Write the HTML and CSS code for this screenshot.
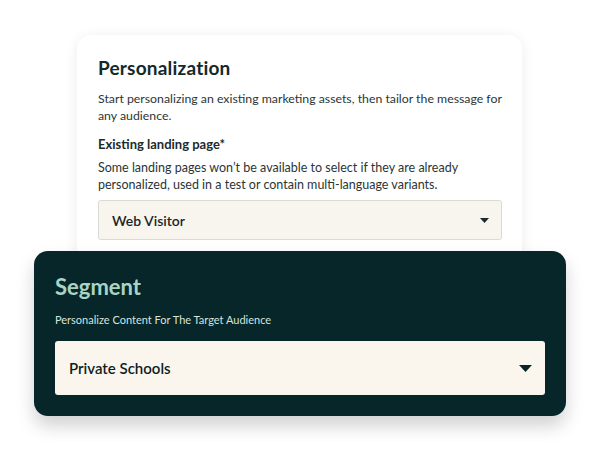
FILE: index.html
```html
<!DOCTYPE html>
<html lang="en">
  <head>
    <meta charset="UTF-8" />
    <meta name="viewport" content="width=device-width, initial-scale=1.0" />
    <title>Personalization</title>
    <link rel="stylesheet" href="styles.css">
  </head>
  <body>
    <div class="stage">
      <div class="panel">
        <h2 class="panel-title">Personalization</h2>
        <p class="panel-text">
          Start personalizing an existing marketing assets, then tailor the message for
          any audience.
        </p>
        <h3 class="field-label">Existing landing page*</h3>
        <p class="field-help">
          Some landing pages won’t be available to select if they are already
          personalized, used in a test or contain multi-language variants.
        </p>
        <div class="select">
          <span>Web Visitor</span>
          <svg class="caret" width="9" height="5" viewBox="0 0 9 5"><path d="M0 0h9L4.5 5z" fill="#1b2b2b"/></svg>
        </div>
      </div>

      <div class="segment">
        <h2 class="segment-title">Segment</h2>
        <p class="segment-text">Personalize Content For The Target Audience</p>
        <div class="select select-lg">
          <span>Private Schools</span>
          <svg class="caret" width="13" height="7" viewBox="0 0 13 7"><path d="M0 0h13L6.5 7z" fill="#0b2424"/></svg>
        </div>
      </div>
    </div>
  </body>
</html>
```

FILE: styles.css
```css
body {
  margin: 0;
  background: #ffffff;
  font-family: Lato, "Noto Sans", sans-serif;
  color: #1c2b2b;
}
.stage {
  width: 600px;
  height: 450px;
  padding-top: 35px;
  box-sizing: border-box;
}
.panel {
  width: 445px;
  height: 240px;
  margin-left: 77px;
  box-sizing: border-box;
  padding: 21px 20px 0 21px;
  background: #fff;
  border-radius: 14px;
  box-shadow: 0 2px 14px rgba(0, 0, 0, 0.08);
}
.panel-title {
  margin: 0;
  font-size: 19px;
  font-weight: 700;
  color: #13292a;
  letter-spacing: 0.2px;
}
.panel-text {
  margin: 11px 0 0;
  font-size: 12.3px;
  line-height: 17px;
  color: #2b3535;
}
.field-label {
  margin: 12px 0 0;
  font-size: 13px;
  font-weight: 700;
  color: #1d2a2a;
}
.field-help {
  margin: 7px 0 0;
  font-size: 12.5px;
  line-height: 17px;
  color: #2b3535;
}
.select {
  display: flex;
  align-items: center;
  justify-content: space-between;
  height: 40px;
  margin-top: 7px;
  padding: 0 12px 0 13px;
  box-sizing: border-box;
  background: #f8f5ee;
  border: 1px solid #dcdad4;
  border-radius: 3px;
  font-size: 14px;
  font-weight: 600;
  color: #1c2626;
}
.segment {
  position: relative;
  width: 532px;
  height: 165px;
  margin: -24px 0 0 34px;
  box-sizing: border-box;
  padding: 22px 21px 0;
  background: #062629;
  border-radius: 14px;
  box-shadow: 0 10px 18px rgba(0, 0, 0, 0.18);
}
.segment-title {
  margin: 0;
  font-size: 22px;
  font-weight: 700;
  color: #a9d4c4;
}
.segment-text {
  margin: 13px 0 0;
  font-size: 11px;
  color: #d6e2de;
}
.select-lg {
  height: 54px;
  margin-top: 15px;
  padding: 0 13px 0 14px;
  border: none;
  background: #faf6ee;
  font-size: 15px;
  color: #0e1e1e;
}
```
